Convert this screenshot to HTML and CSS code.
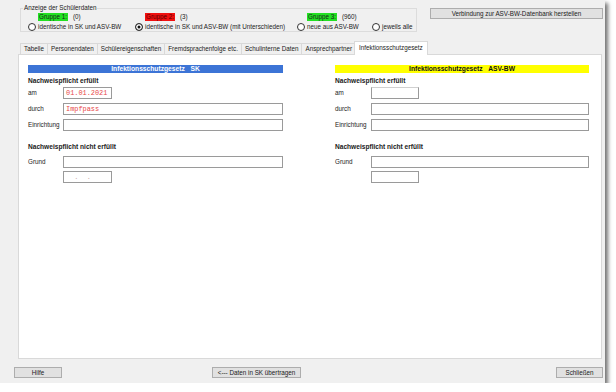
FILE: index.html
```html
<!DOCTYPE html>
<html>
<head>
    <meta charset="utf-8">
    <title>Schülerdaten abgleichen</title>
    <link rel="stylesheet" href="styles.css">
</head>
<body>
    <div class="window">
        <div class="top">
            <fieldset class="anzeige">
                <legend>Anzeige der Schülerdaten</legend>
                <div class="gruppen">
                    <div class="gruppe">
                        <div class="head"><span class="tag gruen">Gruppe 1:</span>(0)</div>
                        <div class="radio"><span class="dot"></span>identische in SK und ASV-BW</div>
                    </div>
                    <div class="gruppe">
                        <div class="head"><span class="tag rot">Gruppe 2:</span>(3)</div>
                        <div class="radio"><span class="dot checked"></span>identische in SK und ASV-BW (mit Unterschieden)</div>
                    </div>
                    <div class="gruppe">
                        <div class="head"><span class="tag gruen">Gruppe 3:</span>(960)</div>
                        <div class="radio"><span class="dot"></span>neue aus ASV-BW</div>
                    </div>
                    <div class="gruppe">
                        <div class="head"></div>
                        <div class="radio"><span class="dot"></span>jeweils alle</div>
                    </div>
                </div>
            </fieldset>
            <button class="btn verbindung">Verbindung zur ASV-BW-Datenbank herstellen</button>
        </div>

        <div class="tabs">
            <span class="tab">Tabelle</span>
            <span class="tab">Personendaten</span>
            <span class="tab">Schülereigenschaften</span>
            <span class="tab">Fremdsprachenfolge etc.</span>
            <span class="tab">Schulinterne Daten</span>
            <span class="tab">Ansprechpartner</span>
            <span class="tab active">Infektionsschutzgesetz</span>
        </div>

        <div class="page">
            <div class="col sk">
                <div class="bar blau">Infektionsschutzgesetz&nbsp;&nbsp;&nbsp;SK</div>
                <h3>Nachweispflicht erfüllt</h3>
                <div class="row"><label>am</label><div class="field kurz rot-text">01.01.2021</div></div>
                <div class="row"><label>durch</label><div class="field rot-text">Impfpass</div></div>
                <div class="row"><label>Einrichtung</label><div class="field"></div></div>
                <h3 class="zwei">Nachweispflicht nicht erfüllt</h3>
                <div class="row"><label>Grund</label><div class="field"></div></div>
                <div class="row klein"><label></label><div class="field kurz leer">&nbsp;&nbsp;.&nbsp;&nbsp;.</div></div>
            </div>
            <div class="col asv">
                <div class="bar gelb">Infektionsschutzgesetz&nbsp;&nbsp;&nbsp;ASV-BW</div>
                <h3>Nachweispflicht erfüllt</h3>
                <div class="row"><label>am</label><div class="field kurz datum"></div></div>
                <div class="row"><label>durch</label><div class="field"></div></div>
                <div class="row"><label>Einrichtung</label><div class="field"></div></div>
                <h3 class="zwei">Nachweispflicht nicht erfüllt</h3>
                <div class="row"><label>Grund</label><div class="field"></div></div>
                <div class="row klein"><label></label><div class="field kurz"></div></div>
            </div>
        </div>

        <div class="bottom">
            <button class="btn hilfe">Hilfe</button>
            <button class="btn uebertragen">&lt;--- Daten in SK übertragen</button>
            <button class="btn schliessen">Schließen</button>
        </div>
    </div>
</body>
</html>
```

FILE: styles.css
```css
html,
body {
    margin: 0;
    padding: 0;
    background: #fff;
    overflow: hidden;
}

body {
    color: #1a1a1a;
    font: 6.3px/8px "Liberation Sans", Arial, sans-serif;
}

.window {
    width: 605px;
    height: 383px;
    background: #f0f0f0;
    box-shadow: 3px 3px 4px rgba(0, 0, 0, 0.55);
    display: flex;
    flex-direction: column;
}

/* oben: Gruppenauswahl + Verbindung */
.top {
    display: flex;
    align-items: flex-start;
    height: 41px;
    flex: none;
}

.anzeige {
    margin: 4px 0 0 20px;
    padding: 0;
    width: 395px;
    height: 26px;
    border: 1px solid #dcdcdc;
}

.anzeige legend {
    margin-left: 2px;
    padding: 0 1px;
    line-height: 8px;
}

.gruppen {
    display: grid;
    grid-template-columns: 107px 162px 75px auto;
    padding: 1px 0 0 7px;
}

.head {
    height: 8px;
    padding-left: 10px;
    display: flex;
}

.tag {
    padding: 0 1px;
    margin-right: 5px;
}

.gruen {
    background: #22e022;
}

.rot {
    background: #f01010;
    color: #5a0000;
}

.radio {
    display: flex;
    align-items: center;
    margin-top: 2px;
    height: 8px;
    white-space: nowrap;
}

.dot {
    width: 6px;
    height: 6px;
    border: 1px solid #333;
    border-radius: 50%;
    background: #fff;
    margin-right: 2px;
}

.dot.checked {
    background: #111;
    box-shadow: inset 0 0 0 1.5px #fff;
}

.btn {
    font: 6.3px/9px "Liberation Sans", Arial, sans-serif;
    color: #1a1a1a;
    background: #e1e1e1;
    border: 1px solid #adadad;
    padding: 0;
    height: 11px;
}

.verbindung {
    margin: 8px 2px 0 auto;
    width: 173px;
}

/* Reiter */
.tabs {
    display: flex;
    align-items: flex-end;
    height: 13px;
    flex: none;
    padding-left: 20px;
    position: relative;
    z-index: 1;
}

.tab {
    height: 10px;
    line-height: 10px;
    padding: 0 3px;
    border: 1px solid #d9d9d9;
    border-bottom: none;
    border-right: none;
    background: #f0f0f0;
}

.tab.active {
    height: 13px;
    line-height: 12px;
    padding: 0 4px;
    margin-left: -1px;
    background: #fff;
    border-right: 1px solid #d9d9d9;
    position: relative;
    top: 1px;
}

.page {
    margin-left: 18px;
    width: 582px;
    height: 293px;
    flex: none;
    background: #fff;
    border: 1px solid #d9d9d9;
    display: flex;
    padding-top: 10px;
}

.col {
    width: 255px;
}

.sk {
    margin-left: 9px;
}

.asv {
    margin-left: 52px;
    width: 254px;
}

.bar {
    height: 8px;
    line-height: 8px;
    font-weight: bold;
    font-size: 6.7px;
    text-align: center;
}

.blau {
    background: #3c74d6;
    color: #fff;
}

.gelb {
    background: #ffff00;
    color: #111;
}

h3 {
    margin: 4px 0 0;
    font-size: 6.6px;
    line-height: 8px;
    font-weight: bold;
}

h3.zwei {
    margin-top: 12px;
}

.row {
    display: flex;
    align-items: center;
    margin-top: 4px;
}

.row:nth-of-type(2) {
    margin-top: 2px;
}

h3 + .row {
    margin-top: 5px;
}

.row.klein {
    margin-top: 3px;
}

.row label {
    width: 35px;
    flex: none;
}

.asv .row label {
    width: 36px;
}

.field {
    flex: 1;
    height: 10px;
    border: 1px solid #9a9a9a;
    background: #fff;
    padding-left: 2px;
    line-height: 10px;
}

.field.kurz {
    flex: none;
    width: 45px;
}

.asv .field.kurz {
    width: 44px;
}

.datum {
    border-top-color: #d0d0d0;
}

.rot-text {
    color: #e84848;
    font: 6.9px/10px "Liberation Mono", "Courier New", monospace;
}

.leer {
    color: #c8a8a8;
    font: 6.9px/10px "Liberation Mono", "Courier New", monospace;
}

/* unten: Schaltflächen */
.bottom {
    display: flex;
    margin-top: 8px;
    padding-left: 14px;
}

.hilfe {
    width: 48px;
}

.uebertragen {
    margin-left: 150px;
    width: 89px;
}

.schliessen {
    margin: 0 2px 0 auto;
    width: 47px;
}
```
